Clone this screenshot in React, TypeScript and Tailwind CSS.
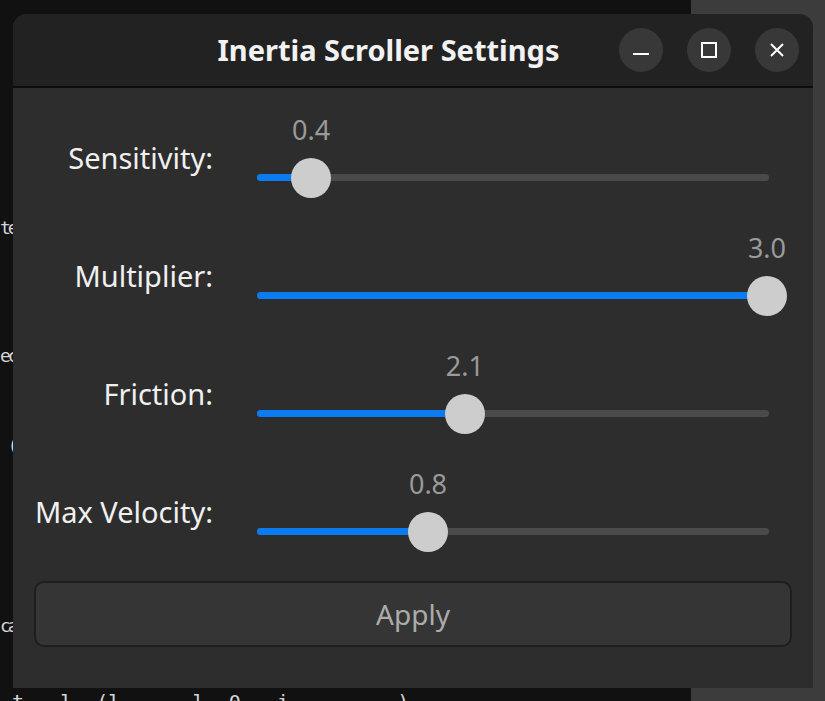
import React from 'react';

interface SliderRow {
  label: string;
  value: string;
  pct: number; // thumb position along the track, 0..1
}

const rows: SliderRow[] = [
  { label: 'Sensitivity:', value: '0.4', pct: 0.1055 },
  { label: 'Multiplier:', value: '3.0', pct: 0.996 },
  { label: 'Friction:', value: '2.1', pct: 0.406 },
  { label: 'Max Velocity:', value: '0.8', pct: 0.334 },
];

// bits of the editor text peeking out behind the window
const backdrop = [
  { top: 'top-[214px]', text: 'te' },
  { top: 'top-[342px]', text: 'ec' },
  { top: 'top-[432px]', text: ' (' },
  { top: 'top-[612px]', text: 'ca' },
];

function Slider({ value, pct }: { value: string; pct: number }) {
  const left = `${pct * 100}%`;
  return (
    <div className="relative w-[512px] h-[84px]">
      {/* value readout, centred over the thumb */}
      <div
        className="absolute top-0 -translate-x-1/2 text-[27px] leading-[32px] text-[#9a9a9a]"
        style={{ left }}
      >
        {value}
      </div>
      {/* track */}
      <div className="absolute left-0 right-0 top-[60px] h-[7px] rounded-full bg-[#4a4a4a]" />
      <div className="absolute left-0 top-[60px] h-[7px] rounded-full bg-[#0a7bf0]" style={{ width: left }} />
      {/* thumb */}
      <div
        className="absolute top-[44px] w-[40px] h-[40px] -translate-x-1/2 rounded-full bg-[#cdcdcd]"
        style={{ left }}
      />
    </div>
  );
}

function TitleButton({ children }: { children: React.ReactNode }) {
  return (
    <div className="w-[44px] h-[44px] rounded-full bg-[#383838] flex items-center justify-center">
      {children}
    </div>
  );
}

export default function App() {
  return (
    <div
      className="relative w-[825px] h-[701px] overflow-hidden bg-[#111111]"
      style={{ fontFamily: '"Noto Sans", "Open Sans", sans-serif' }}
    >
      {/* desktop behind the window */}
      <div className="absolute left-[691px] top-0 right-0 bottom-0 bg-[#3c3c3c]" />
      {backdrop.map((b) => (
        <div
          key={b.top}
          className={`absolute left-0 ${b.top} whitespace-pre text-[18px] leading-[28px] tracking-[-3px] text-[#d6d6d6]`}
          style={{ fontFamily: '"DejaVu Sans Mono", monospace' }}
        >
          {b.text}
        </div>
      ))}
      <div
        className="absolute left-[12px] top-[690px] whitespace-pre text-[20px] leading-[24px] text-[#d6d6d6]"
        style={{ fontFamily: '"DejaVu Sans Mono", monospace' }}
      >
        {'t   l  (l      l  0   i         )'}
      </div>

      {/* settings window */}
      <div className="absolute left-[13px] top-[14px] w-[800px] h-[674px] rounded-t-[14px] overflow-hidden bg-[#2d2d2d] flex flex-col">
        {/* header bar */}
        <div className="h-[74px] shrink-0 flex items-center bg-[#222222] border-b-2 border-[#0c0c0c] pr-[14px]">
          <div className="flex-1 flex justify-center pl-[157px] pr-[12px]">
            <span className="text-[29px] font-bold text-[#f2f2f2] whitespace-nowrap">Inertia Scroller Settings</span>
          </div>
          <div className="flex items-center gap-[24px]">
            <TitleButton>
              <div className="w-[16px] h-[2px] mt-[8px] bg-white" />
            </TitleButton>
            <TitleButton>
              <div className="w-[16px] h-[16px] border-2 border-white" />
            </TitleButton>
            <TitleButton>
              <svg width="16" height="16" viewBox="0 0 16 16" fill="none" stroke="white" strokeWidth="2">
                <path d="M2 2 L14 14 M14 2 L2 14" />
              </svg>
            </TitleButton>
          </div>
        </div>

        {/* body */}
        <div className="flex-1 flex flex-col px-[21px] pt-[26px]">
          <div className="flex flex-col gap-[34px]">
            {rows.map((r) => (
              <div key={r.label} className="flex items-center gap-[44px]">
                <div className="w-[179px] text-right text-[29px] leading-none text-[#f0f0f0] whitespace-nowrap pt-[2px]">
                  {r.label}
                </div>
                <Slider value={r.value} pct={r.pct} />
              </div>
            ))}
          </div>

          <button className="mt-[29px] h-[66px] w-full rounded-[10px] border-2 border-[#1e1e1e] bg-[#353535] text-[28px] text-[#ababab]">
            Apply
          </button>
        </div>
      </div>
    </div>
  );
}
